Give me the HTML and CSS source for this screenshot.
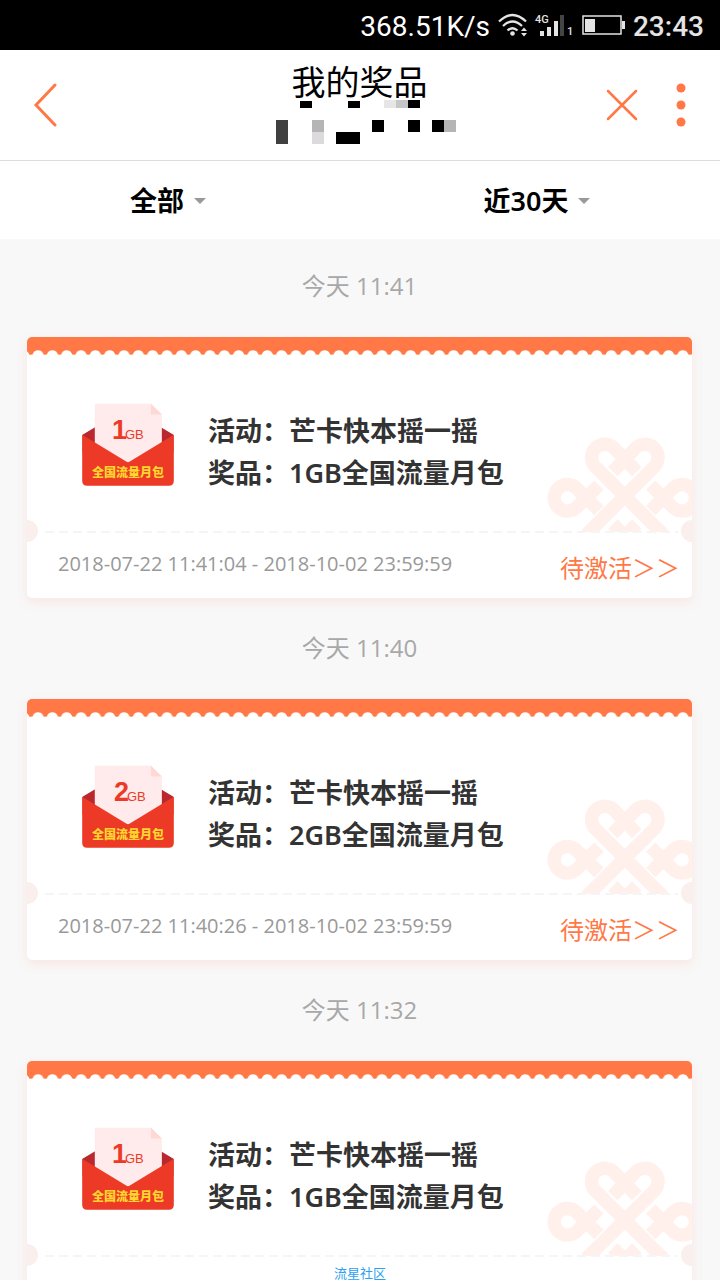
FILE: index.html
```html
<!DOCTYPE html>
<html lang="zh-CN">
<head>
<meta charset="utf-8">
<meta name="viewport" content="width=device-width, initial-scale=1">
<title>我的奖品</title>
<link rel="stylesheet" href="styles.css">
</head>
<body>
<svg class="defs" aria-hidden="true">
  <defs>
    <pattern id="scallop" width="14.33" height="18" patternUnits="userSpaceOnUse" x="3.9">
      <path fill="#ff7846" d="M0 0H14.33V17.500Q12.800 18.200 12.200 16.500A5.600 5.600 0 0 0 2.100 16.500Q1.500 18.200 0 17.500Z"/>
    </pattern>
    <symbol id="envelope" viewBox="240 250 288 250">
      <path fill="#b9282f" d="M247 346L286 322V400H247ZM521 346L482 322V400H521Z"/>
      <path fill="#ffebeb" d="M284 256Q284 252 288 252H453L486 285V440H284Z"/>
      <path fill="#ffd7d5" d="M453 252L486 285H453Z"/>
      <path fill="#ec3a26" d="M246 346L376 425Q384 432 392 425L522 346V484Q522 499 507 499H261Q246 499 246 484Z"/>
    </symbol>
    <symbol id="knot" viewBox="80 108 436 284">
      <g fill="none" stroke="#fff0eb" stroke-width="40">
        <path d="M350 211L286 145A40 40 0 1 0 230 201L430 401"/>
        <path d="M278 211L342 145A40 40 0 1 1 398 201L198 401"/>
        <path d="M236 252L170 318A40 40 0 1 1 170 262L236 328"/>
        <path d="M392 252L458 318A40 40 0 1 0 458 262L392 328"/>
        <path d="M278 369L310 401M350 369L318 401"/>
      </g>
    </symbol>
  </defs>
</svg>

<div class="app">
  <div class="status">
    <span class="speed">368.51K/s</span>
    <svg class="signals" width="84" height="24" viewBox="0 0 84 24" aria-hidden="true">
      <g fill="none" stroke="#e4e4e4" stroke-width="2.300">
        <path d="M1 8.500Q14.500 -4.500 28 8.500M5 13Q14.500 4 24 13M9.500 17.500Q14.500 13 19.500 17.500"/>
      </g>
      <circle cx="14.500" cy="20.500" r="2.300" fill="#e4e4e4"/>
      <path fill="#e4e4e4" d="M23 18L26 14.500L29 18ZM23 20L26 23.500L29 20Z"/>
      <text class="net" x="37" y="10">4G</text>
      <path fill="#e4e4e4" d="M42 18H46V23H42ZM49 14H53V23H49ZM56 8H60V23H56Z"/>
      <path fill="#444" d="M62 2H66V23H62Z"/>
      <text class="net" x="69" y="22">1</text>
    </svg>
    <svg class="battery" width="43" height="21" viewBox="0 0 43 21" aria-hidden="true">
      <rect x="1" y="1" width="38" height="18" fill="none" stroke="#e4e4e4" stroke-width="1.500"/>
      <path fill="#e4e4e4" d="M3 4H13V17H3ZM40 6H43V14H40Z"/>
    </svg>
    <span class="clock">23:43</span>
  </div>

  <header class="header">
    <button class="icon-btn back" aria-label="返回">
      <svg width="24" height="44" viewBox="0 0 24 44"><path fill="none" stroke="#ff7846" stroke-width="3" stroke-linecap="round" d="M22 2L3 22L22 42"/></svg>
    </button>
    <div class="heading">
      <h1>我的奖品</h1>
      <svg class="mosaic" width="182" height="44" viewBox="0 0 182 44" aria-hidden="true">
        <path fill="#000" d="M24 1H36V8H24ZM72 1H84V8H72ZM132 0H144V8H132ZM96 20H108V32H96ZM132 20H144V32H132ZM156 20H168V32H156ZM60 32H84V44H60Z"/>
        <path fill="#404040" d="M0 20H12V44H0Z"/>
        <path fill="#b5b5b5" d="M36 20H48V32H36ZM168 20H180V32H168Z"/>
        <path fill="#dcdadd" d="M36 32H48V44H36Z"/>
        <path fill="#e6e6e6" d="M108 0H120V8H108Z"/>
        <path fill="#c6c6c6" d="M120 0H132V8H120Z"/>
      </svg>
    </div>
    <div class="actions">
      <button class="icon-btn" aria-label="关闭">
        <svg width="32" height="32" viewBox="0 0 32 32"><path fill="none" stroke="#ff7846" stroke-width="2.500" stroke-linecap="round" d="M2 2L30 30M30 2L2 30"/></svg>
      </button>
      <button class="icon-btn" aria-label="更多">
        <svg width="10" height="44" viewBox="0 0 10 44"><g fill="#ff7846"><circle cx="5" cy="5" r="4.500"/><circle cx="5" cy="22" r="4.500"/><circle cx="5" cy="39" r="4.500"/></g></svg>
      </button>
    </div>
  </header>

  <nav class="filters">
    <button class="filter kind">全部<span class="caret"></span></button>
    <button class="filter period">近30天<span class="caret"></span></button>
  </nav>

  <main class="list">
    <time class="when">今天 11:41</time>
    <article class="card">
      <svg class="edge" aria-hidden="true"><rect width="100%" height="18" fill="url(#scallop)"/></svg>
      <div class="body">
        <svg class="knot" aria-hidden="true"><use href="#knot"/></svg>
        <svg class="envelope" viewBox="0 0 96 83"><use href="#envelope" width="96" height="83"/><text class="num" x="32" y="36">1</text><text class="unit" x="45" y="36">GB</text><text class="pack" x="12" y="74">全国流量月包</text></svg>
        <div class="info"><p>活动：芒卡快本摇一摇</p><p>奖品：1GB全国流量月包</p></div>
      </div>
      <div class="foot"><span class="range">2018-07-22 11:41:04 - 2018-10-02 23:59:59</span><a class="activate" href="#">待激活＞＞</a></div>
    </article>

    <time class="when">今天 11:40</time>
    <article class="card">
      <svg class="edge" aria-hidden="true"><rect width="100%" height="18" fill="url(#scallop)"/></svg>
      <div class="body">
        <svg class="knot" aria-hidden="true"><use href="#knot"/></svg>
        <svg class="envelope" viewBox="0 0 96 83"><use href="#envelope" width="96" height="83"/><text class="num" x="34" y="36">2</text><text class="unit" x="47" y="36">GB</text><text class="pack" x="12" y="74">全国流量月包</text></svg>
        <div class="info"><p>活动：芒卡快本摇一摇</p><p>奖品：2GB全国流量月包</p></div>
      </div>
      <div class="foot"><span class="range">2018-07-22 11:40:26 - 2018-10-02 23:59:59</span><a class="activate" href="#">待激活＞＞</a></div>
    </article>

    <time class="when">今天 11:32</time>
    <article class="card">
      <svg class="edge" aria-hidden="true"><rect width="100%" height="18" fill="url(#scallop)"/></svg>
      <div class="body">
        <svg class="knot" aria-hidden="true"><use href="#knot"/></svg>
        <svg class="envelope" viewBox="0 0 96 83"><use href="#envelope" width="96" height="83"/><text class="num" x="32" y="36">1</text><text class="unit" x="45" y="36">GB</text><text class="pack" x="12" y="74">全国流量月包</text></svg>
        <div class="info"><p>活动：芒卡快本摇一摇</p><p>奖品：1GB全国流量月包</p></div>
      </div>
      <div class="foot"></div>
    </article>
  </main>
  <div class="watermark">流星社区</div>
</div>
</body>
</html>
```
FILE: styles.css
```css
* { box-sizing: border-box; }

body {
  margin: 0;
  background: #f8f8f8;
  font-family: "Noto Sans", "Noto Sans CJK SC", sans-serif;
  color: #000;
}

h1, p { margin: 0; }

button {
  border: 0;
  padding: 0;
  background: none;
  font: inherit;
  color: inherit;
}

.defs { position: absolute; width: 0; height: 0; }

.app {
  position: relative;
  display: flex;
  flex-direction: column;
  height: 100vh;
  overflow: hidden;
}

.status {
  flex: none;
  display: flex;
  align-items: center;
  justify-content: flex-end;
  height: 50px;
  padding-right: 16px;
  background: #000;
  color: #fff;
  font-family: Roboto, sans-serif;
  font-size: 28px;
}

.speed { margin-right: 8px; padding-top: 3px; }
.clock { margin-left: 8px; padding-top: 2px; color: #e4e4e4; font-weight: 500; }
.signals { overflow: visible; }
.net { font: 500 11px Roboto, sans-serif; fill: #e4e4e4; }

.header {
  flex: none;
  display: grid;
  grid-template-columns: 1fr auto 1fr;
  align-items: center;
  height: 111px;
  padding: 0 34px 0 33px;
  background: #fff;
  border-bottom: 1px solid #ddd;
}

.icon-btn { display: flex; }
.back { justify-self: start; }

.heading {
  display: flex;
  flex-direction: column;
  align-items: center;
  padding-bottom: 4px;
}

.heading h1 {
  font-size: 34px;
  font-weight: 400;
  line-height: 38px;
  font-family: "Noto Sans CJK SC", sans-serif;
}

.mosaic { margin-left: 14px; }

.actions {
  display: flex;
  align-items: center;
  justify-content: flex-end;
  gap: 38px;
}

.filters {
  flex: none;
  display: grid;
  grid-template-columns: 1fr 1fr;
  height: 78px;
  background: #fff;
}

.filter {
  display: flex;
  align-items: center;
  justify-content: center;
  gap: 10px;
  padding-bottom: 2px;
  font-size: 27px;
  font-weight: 600;
}

.kind { padding-right: 24px; }
.period { padding-right: 6px; }

.caret {
  margin-top: 3px;
  border: 6px solid transparent;
  border-top-color: #999;
  border-bottom-width: 0;
}

.list {
  flex: 1;
  min-height: 0;
  overflow: hidden;
  padding: 0 28px 0 27px;
}

.when {
  display: block;
  height: 98px;
  line-height: 94px;
  text-align: center;
  font-family: "Open Sans", "Noto Sans CJK SC", sans-serif;
  font-size: 24px;
  color: #a8a8a8;
}

.card {
  position: relative;
  margin-bottom: 3px;
  border-radius: 5px;
  background: #fff;
  box-shadow: 0 4px 12px rgba(255, 110, 70, 0.12);
}

.edge {
  display: block;
  width: 100%;
  height: 18px;
  border-radius: 5px 5px 0 0;
}

.body {
  position: relative;
  display: flex;
  align-items: flex-start;
  gap: 32px;
  height: 177px;
  padding: 48px 53px 0;
}

/* dashed tear line */
.body::after {
  content: "";
  position: absolute;
  left: 18px;
  right: 14px;
  bottom: -1px;
  height: 2px;
  background: repeating-linear-gradient(90deg, #f5f5f5 0 9px, transparent 9px 14px);
}

/* half-circle punches at both ends of the tear line */
.card::before,
.card::after {
  content: "";
  position: absolute;
  top: 183px;
  width: 11px;
  height: 22px;
  background: #faefec;
}

.card::before { left: 0; border-radius: 0 11px 11px 0; }
.card::after { right: 0; border-radius: 11px 0 0 11px; }

.knot {
  position: absolute;
  right: 0;
  bottom: 0;
  width: 145px;
  height: 95px;
}

.envelope { flex: none; width: 96px; height: 83px; }
.num { font: 700 27px "Liberation Sans Narrow", "Liberation Sans", sans-serif; fill: #ec3a26; }
.unit { font: 400 13px "Liberation Sans", sans-serif; fill: #ec3a26; }
.pack { font: 900 12px "Noto Sans CJK SC", sans-serif; fill: #ffd52e; }

.info {
  position: relative;
  padding-top: 7px;
  font-size: 27px;
  font-weight: 600;
  line-height: 42px;
  color: #333;
  white-space: nowrap;
}

.foot {
  display: flex;
  align-items: center;
  justify-content: space-between;
  height: 66px;
  padding: 0 12px 0 31px;
}

.range {
  padding-bottom: 4px;
  font-family: "Open Sans", sans-serif;
  font-size: 20px;
  color: #999;
}

.activate {
  padding-top: 2px;
  font-size: 24px;
  font-weight: 400;
  color: #ff7846;
  text-decoration: none;
  font-family: "Noto Sans CJK SC", sans-serif;
}

.watermark {
  position: absolute;
  left: 0;
  right: 0;
  bottom: 0;
  text-align: center;
  font-size: 13px;
  line-height: 14px;
  color: #2d9ff0;
}
```
